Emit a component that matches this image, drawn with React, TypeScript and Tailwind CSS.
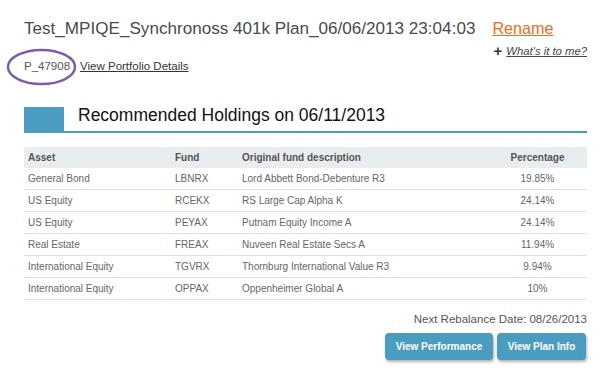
const holdings = [
    { asset: 'General Bond', fund: 'LBNRX', desc: 'Lord Abbett Bond-Debenture R3', pct: '19.85%' },
    { asset: 'US Equity', fund: 'RCEKX', desc: 'RS Large Cap Alpha K', pct: '24.14%' },
    { asset: 'US Equity', fund: 'PEYAX', desc: 'Putnam Equity Income A', pct: '24.14%' },
    { asset: 'Real Estate', fund: 'FREAX', desc: 'Nuveen Real Estate Secs A', pct: '11.94%' },
    { asset: 'International Equity', fund: 'TGVRX', desc: 'Thornburg International Value R3', pct: '9.94%' },
    { asset: 'International Equity', fund: 'OPPAX', desc: 'Oppenheimer Global A', pct: '10%' },
]

const cols = 'grid grid-cols-[147px_67px_250px_99px]'

export default function App() {
    return (
        <div className="w-[614px] h-[376px] bg-white font-['Liberation_Sans',Arial,sans-serif] overflow-hidden">
            <div className="w-[563px] ml-[24px] pt-[18px]">
                {/* title */}
                <div className="flex items-baseline h-[20px]">
                    <h1 className="text-[17.1px] leading-[20px] text-[#4a4a4a] whitespace-nowrap">
                        Test_MPIQE_Synchronoss 401k Plan_06/06/2013 23:04:03
                    </h1>
                    <a className="ml-[17px] text-[16.2px] leading-[20px] text-[#f26b21] underline">Rename</a>
                </div>
                <div className="flex justify-end items-center mt-[6px] h-[14px]">
                    <span className="text-[15px] leading-[14px] font-bold text-[#333] mr-[4px]">+</span>
                    <a className="text-[11.3px] leading-[14px] italic underline text-[#444]">What's it to me?</a>
                </div>
                <div className="relative flex items-center mt-[1px] h-[14px] text-[11.5px] leading-[14px]">
                    <svg className="absolute left-[-18px] top-[-11px]" width="72" height="40" viewBox="0 0 72 40">
                        <ellipse cx="35.5" cy="19" rx="33.5" ry="17" fill="none" stroke="#7b5ea3" strokeWidth="2.5" />
                    </svg>
                    <span className="text-[#555]">P_47908</span>
                    <a className="ml-[10px] underline text-[#333]">View Portfolio Details</a>
                </div>

                {/* section heading */}
                <div className="mt-[34px] flex h-[26px] border-b-2 border-[#4a9cc1]">
                    <div className="w-[40px] h-[24px] bg-[#4a9cc1]" />
                    <h2 className="ml-[14px] -mt-[1px] text-[17.5px] leading-[18px] text-[#111] whitespace-nowrap">
                        Recommended Holdings on 06/11/2013
                    </h2>
                </div>

                {/* table */}
                <div className="mt-[14px] text-[10px]">
                    <div className={`${cols} h-[21px] items-center bg-[#e8eef0] font-bold text-[#555]`}>
                        <div className="pl-[4px]">Asset</div>
                        <div className="pl-[4px]">Fund</div>
                        <div className="pl-[4px]">Original fund description</div>
                        <div className="text-center">Percentage</div>
                    </div>
                    {holdings.map((h, i) => (
                        <div key={i} className={`${cols} h-[22px] items-center border-b border-[#dde4e7] text-[#666]`}>
                            <div className="pl-[4px]">{h.asset}</div>
                            <div className="pl-[4px]">{h.fund}</div>
                            <div className="pl-[4px]">{h.desc}</div>
                            <div className="text-center">{h.pct}</div>
                        </div>
                    ))}
                </div>

                <p className="mt-[12px] text-right text-[11.5px] leading-[14px] text-[#555]">
                    Next Rebalance Date: 08/26/2013
                </p>
                <div className="mt-[7px] flex justify-end gap-[4px] pr-[1px]">
                    <button className="w-[108px] h-[27px] rounded-[4px] bg-[#4a9cc1] text-white text-[10px] font-bold shadow-[1px_2px_3px_rgba(0,0,0,0.3)]">
                        View Performance
                    </button>
                    <button className="w-[89px] h-[27px] rounded-[4px] bg-[#4a9cc1] text-white text-[10px] font-bold shadow-[1px_2px_3px_rgba(0,0,0,0.3)]">
                        View Plan Info
                    </button>
                </div>
            </div>
        </div>
    )
}
